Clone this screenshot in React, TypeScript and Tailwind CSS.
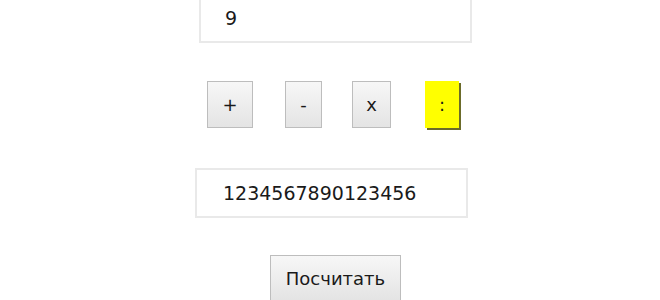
import { useState } from 'react'
import clsx from 'clsx'

const ops = [
  { key: '+', w: 'w-[46px]', ml: 'ml-[207px]' },
  { key: '-', w: 'w-[37px]', ml: 'ml-[32px]' },
  { key: 'x', w: 'w-[39px]', ml: 'ml-[30px]' },
  { key: ':', w: 'w-[34px]', ml: 'ml-[34px]' },
]

export default function App() {
  const [a, setA] = useState('9')
  const [b, setB] = useState('1234567890123456')
  const [op, setOp] = useState(':')

  return (
    <div className="w-[660px] h-[300px] overflow-hidden bg-white text-[#1a1a1a] font-['DejaVu_Sans',Verdana,sans-serif]">
      <div className="flex flex-col">
        <input
          value={a}
          onChange={(e) => setA(e.target.value)}
          className="ml-[199px] mt-[-7px] w-[273px] h-[50px] border-2 border-[#e9e9e9] bg-white pl-[24px] text-[19px] text-[#1a1a1a] outline-none"
        />

        {/* Кнопки операций */}
        <div className="flex mt-[38px] h-[48px]">
          {ops.map((o) => (
            <button
              key={o.key}
              type="button"
              onClick={() => setOp(o.key)}
              className={clsx(
                'h-[47px] text-[18px] flex items-center justify-center',
                o.w,
                o.ml,
                op === o.key
                  ? 'bg-[#ffff00] shadow-[2px_2px_0_#6b6b2a] h-[46px]'
                  : 'bg-gradient-to-b from-[#f7f7f7] to-[#e4e4e4] border border-[#bdbdbd]'
              )}
            >
              {o.key}
            </button>
          ))}
        </div>

        <input
          value={b}
          onChange={(e) => setB(e.target.value)}
          className="ml-[195px] mt-[39px] w-[273px] h-[50px] border-2 border-[#e9e9e9] bg-white pl-[26px] text-[19px] text-[#1a1a1a] outline-none"
        />

        <button
          type="button"
          className="ml-[270px] mt-[37px] w-[131px] h-[50px] pb-[4px] border border-[#bdbdbd] bg-gradient-to-b from-[#f7f7f7] to-[#e2e2e2] text-[18px]"
        >
          Посчитать
        </button>
      </div>
    </div>
  )
}
